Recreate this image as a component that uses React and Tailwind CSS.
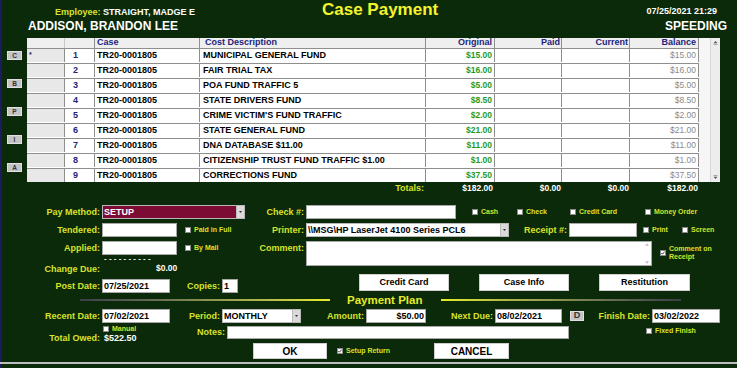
import React from 'react';

const items = [
  { n: 1, desc: 'MUNICIPAL GENERAL FUND', amt: '$15.00' },
  { n: 2, desc: 'FAIR TRIAL TAX', amt: '$16.00' },
  { n: 3, desc: 'POA FUND TRAFFIC 5', amt: '$5.00' },
  { n: 4, desc: 'STATE DRIVERS FUND', amt: '$8.50' },
  { n: 5, desc: "CRIME VICTIM'S FUND TRAFFIC", amt: '$2.00' },
  { n: 6, desc: 'STATE GENERAL FUND', amt: '$21.00' },
  { n: 7, desc: 'DNA DATABASE $11.00', amt: '$11.00' },
  { n: 8, desc: 'CITIZENSHIP TRUST FUND TRAFFIC $1.00', amt: '$1.00' },
  { n: 9, desc: 'CORRECTIONS FUND', amt: '$37.50' },
];

const Lbl = ({ w, children, cls = '' }) => (
  <div className={`${w} shrink-0 whitespace-nowrap pr-[2px] text-right text-[9px] font-bold leading-[14px] text-[#d9e22b] ${cls}`}>
    {children}
  </div>
);

const Field = ({ w, children, cls = '' }) => (
  <div className={`${w} h-[14px] shrink-0 overflow-hidden whitespace-nowrap border border-[#a8a8a8] bg-white px-[1px] text-[9px] font-bold leading-[12px] text-black ${cls}`}>
    {children}
  </div>
);

const Arrow = () => (
  <span className="flex w-[8px] shrink-0 items-center justify-center border-l border-[#bdbdbd] bg-[#dadada]">
    <svg width="3" height="2" viewBox="0 0 3 2">
      <path d="M0 0h3L1.5 2z" fill="#333" />
    </svg>
  </span>
);

const Select = ({ w, children, cls = '' }) => (
  <div className={`${w} flex h-[14px] shrink-0 items-stretch border border-[#b8b8b8] text-[9px] font-bold leading-[12px] ${cls}`}>
    <span className="flex-1 overflow-hidden whitespace-nowrap pl-[1px]">{children}</span>
    <Arrow />
  </div>
);

const Check = ({ label, checked, w = '', cls = '' }) => (
  <div className={`${w} flex shrink-0 items-center gap-[3px] whitespace-nowrap text-[7px] font-bold leading-[8px] text-[#d9e22b] ${cls}`}>
    <span className="flex h-[6px] w-[6px] shrink-0 items-center justify-center border border-[#8a8a8a] bg-white">
      {checked && (
        <svg width="4" height="4" viewBox="0 0 4 4">
          <path d="M0.3 2l1.1 1.2L3.7 0.6" stroke="#222" strokeWidth="0.9" fill="none" />
        </svg>
      )}
    </span>
    {label}
  </div>
);

const Btn = ({ w, h = 'h-[17px]', bg = 'bg-white border-[#cfcfcf] text-black', children, cls = '' }) => (
  <div className={`${w} ${h} ${bg} flex shrink-0 items-center justify-center border text-[9px] font-bold ${cls}`}>
    {children}
  </div>
);

const SideBtn = ({ children }) => (
  <div className="flex h-[9px] w-[15px] items-center justify-center border border-[#e0e0e0] bg-[#c4c4c4] text-[6.5px] font-bold text-[#333]">
    {children}
  </div>
);

const cell = 'flex h-full shrink-0 items-center border-r border-[#8e8e8e]';

export default function App() {
  return (
    <div
      className="flex h-[368px] w-[737px] flex-col overflow-hidden bg-[#0a2a0a] text-white shadow-[inset_2px_0_0_#1b1b5e]"
      style={{ fontFamily: '"Liberation Sans", Arial, sans-serif' }}
    >
      {/* header */}
      <div className="flex h-[19px] shrink-0">
        <div className="w-[322px] shrink-0 whitespace-nowrap pl-[55px] pt-[8px] text-[9px] font-bold leading-[9px]">
          <span className="text-[#d9e22b]">Employee:</span> STRAIGHT, MADGE E
        </div>
        <div className="w-[120px] shrink-0 whitespace-nowrap text-[17px] font-bold leading-[20px] text-[#f4f42c]">Case Payment</div>
        <div className="flex-1 pr-[20px] pt-[7px] text-right text-[9px] font-bold leading-[9px]">07/25/2021 21:29</div>
      </div>
      <div className="flex h-[19px] shrink-0 justify-between text-[12px] font-bold leading-[14px]">
        <div className="pl-[28px]">ADDISON, BRANDON LEE</div>
        <div className="pr-[10px]">SPEEDING</div>
      </div>

      {/* grid */}
      <div className="flex h-[144px] shrink-0">
        <div className="flex w-[27px] shrink-0 flex-col items-end gap-[19px] pr-[5px] pt-[13px]">
          <SideBtn>C</SideBtn>
          <SideBtn>B</SideBtn>
          <SideBtn>P</SideBtn>
          <SideBtn>I</SideBtn>
          <SideBtn>A</SideBtn>
        </div>
        <div className="flex w-[693px] shrink-0 overflow-hidden bg-white">
          <div className="w-[672px] shrink-0 text-[9px] font-bold">
            <div className="flex h-[11px] border-b border-[#8e8e8e] bg-[#efefef] text-[#23237a]">
              <div className={`${cell} w-[38px] border-[#c8c8c8]`} />
              <div className={`${cell} w-[30px]`} />
              <div className={`${cell} w-[105px] pl-[2px]`}>Case</div>
              <div className={`${cell} w-[226px] pl-[5px]`}>Cost Description</div>
              <div className={`${cell} w-[69px] justify-end pr-[2px]`}>Original</div>
              <div className={`${cell} w-[67px] justify-end pr-[1px]`}>Paid</div>
              <div className={`${cell} w-[68px] justify-end pr-[1px]`}>Current</div>
              <div className={`${cell} w-[69px] justify-end pr-[2px]`}>Balance</div>
            </div>
            {items.map((r) => (
              <div key={r.n} className="flex h-[15px] border-b border-[#8e8e8e] pb-[1px]">
                <div className={`${cell} w-[38px] items-start bg-[#e8e8e8] pl-[2px] pt-[2px] text-[7px] leading-[7px] text-[#23237a]`}>
                  {r.n === 1 ? '*' : ''}
                </div>
                <div className={`${cell} w-[30px] pl-[8px] text-[#23237a]`}>{r.n}</div>
                <div className={`${cell} w-[105px] pl-[2px] text-black`}>TR20-0001805</div>
                <div className={`${cell} w-[226px] whitespace-nowrap pl-[3px] text-black`}>{r.desc}</div>
                <div className={`${cell} w-[69px] justify-end pr-[2px] text-[8.5px] text-[#1f9a1f]`}>{r.amt}</div>
                <div className={`${cell} w-[67px]`} />
                <div className={`${cell} w-[68px]`} />
                <div className={`${cell} w-[69px] justify-end pr-[2px] text-[8.5px] font-normal text-[#8a8a8a]`}>{r.amt}</div>
              </div>
            ))}
          </div>
          <div className="flex flex-1 justify-end bg-[#f6f6f6]">
            <div className="flex w-[10px] flex-col items-center justify-between border-l border-[#d6d6d6] bg-[#ededed] py-[2px]">
              <svg width="5" height="5" viewBox="0 0 5 5">
                <path d="M0.5 3.2h4L2.5 1z" fill="#555" />
                <path d="M0.5 4.5h4" stroke="#777" strokeWidth="0.6" />
              </svg>
              <svg width="5" height="5" viewBox="0 0 5 5">
                <path d="M0.5 1.8h4L2.5 4z" fill="#555" />
                <path d="M0.5 0.5h4" stroke="#777" strokeWidth="0.6" />
              </svg>
            </div>
          </div>
        </div>
      </div>

      {/* totals */}
      <div className="flex h-[12px] shrink-0 text-[8.5px] font-bold leading-[12px]">
        <div className="w-[426px] shrink-0 pr-[2px] text-right text-[9px] text-[#d9e22b]">Totals:</div>
        <div className="w-[69px] shrink-0 pr-[2px] text-right">$182.00</div>
        <div className="w-[67px] shrink-0 pr-[1px] text-right">$0.00</div>
        <div className="w-[68px] shrink-0 pr-[1px] text-right">$0.00</div>
        <div className="w-[68px] shrink-0 text-right">$182.00</div>
      </div>

      {/* pay method */}
      <div className="mt-[11px] flex h-[14px] shrink-0 items-center">
        <Lbl w="w-[102px]">Pay Method:</Lbl>
        <Select w="w-[143px]" cls="bg-[#7c0c34] text-white">SETUP</Select>
        <Lbl w="w-[61px]">Check #:</Lbl>
        <Field w="w-[150px]" />
        <Check w="w-[45px]" cls="ml-[16px]" label="Cash" />
        <Check w="w-[53px]" label="Check" />
        <Check w="w-[75px]" label="Credit Card" />
        <Check label="Money Order" />
      </div>

      {/* tendered */}
      <div className="mt-[4px] flex h-[14px] shrink-0 items-center">
        <Lbl w="w-[102px]">Tendered:</Lbl>
        <Field w="w-[75px]" />
        <Check w="w-[60px]" cls="ml-[8px]" label="Paid in Full" />
        <Lbl w="w-[61px]">Printer:</Lbl>
        <Select w="w-[203px]" cls="bg-white text-black">\\MSG\HP LaserJet 4100 Series PCL6</Select>
        <Lbl w="w-[60px]">Receipt #:</Lbl>
        <Field w="w-[68px]" />
        <Check w="w-[39px]" cls="ml-[6px]" label="Print" />
        <Check label="Screen" />
      </div>

      {/* applied / comment */}
      <div className="mt-[4px] flex h-[33px] shrink-0 items-start">
        <div className="w-[306px] shrink-0">
          <div className="flex h-[14px] items-center">
            <Lbl w="w-[102px]">Applied:</Lbl>
            <Field w="w-[75px]" />
            <Check w="w-[60px]" cls="ml-[8px]" label="By Mail" />
            <Lbl w="w-[61px]" cls="self-start leading-[12px]">Comment:</Lbl>
          </div>
          <div className="h-[8px] whitespace-pre pl-[104px] text-[8px] font-bold leading-[8px]">- - - - - - - - - -</div>
          <div className="flex h-[11px] items-center">
            <Lbl w="w-[102px]" cls="leading-[11px]">Change Due:</Lbl>
            <div className="ml-[54px] text-[8.5px] font-bold">$0.00</div>
          </div>
        </div>
        <div className="flex h-[25px] w-[346px] shrink-0 justify-end border border-[#a8a8a8] bg-white">
          <div className="flex w-[8px] flex-col items-center justify-between py-[1px]">
            <svg width="4" height="3" viewBox="0 0 4 3"><path d="M0 3h4L2 0z" fill="#c8c8c8" /></svg>
            <svg width="4" height="3" viewBox="0 0 4 3"><path d="M0 0h4L2 3z" fill="#c8c8c8" /></svg>
          </div>
        </div>
        <Check cls="ml-[8px] mt-[4px]" checked label={<span>Comment on<br />Receipt</span>} />
      </div>

      {/* post date + buttons */}
      <div className="flex h-[19px] shrink-0 items-start">
        <div className="mt-[5px] flex h-[14px] items-center">
          <Lbl w="w-[102px]">Post Date:</Lbl>
          <Field w="w-[68px]">07/25/2021</Field>
          <Lbl w="w-[52px]">Copies:</Lbl>
          <Field w="w-[16px]">1</Field>
        </div>
        <Btn w="w-[90px]" cls="ml-[121px]">Credit Card</Btn>
        <Btn w="w-[90px]" cls="ml-[30px]">Case Info</Btn>
        <Btn w="w-[91px]" cls="ml-[30px]">Restitution</Btn>
      </div>

      {/* payment plan divider */}
      <div className="flex h-[14px] shrink-0 items-center">
        <div className="ml-[80px] h-[2px] w-[250px] bg-gradient-to-r from-[#3a3f4a] to-[#e6ea2a]" />
        <div className="ml-[17px] whitespace-nowrap text-[11.5px] font-bold leading-[14px] text-[#e6ea2a]">Payment Plan</div>
        <div className="ml-[19px] h-[2px] w-[240px] bg-gradient-to-r from-[#e6ea2a] to-[#3a3f4a]" />
      </div>

      {/* recent date */}
      <div className="mt-[2px] flex h-[14px] shrink-0 items-center">
        <Lbl w="w-[102px]">Recent Date:</Lbl>
        <Field w="w-[68px]">07/02/2021</Field>
        <Lbl w="w-[52px]">Period:</Lbl>
        <Select w="w-[79px]" cls="bg-white text-black">MONTHLY</Select>
        <Lbl w="w-[65px]">Amount:</Lbl>
        <Field w="w-[60px]" cls="text-right">$50.00</Field>
        <Lbl w="w-[69px]">Next Due:</Lbl>
        <Field w="w-[67px]">08/02/2021</Field>
        <Btn w="w-[14px]" h="h-[10px]" bg="bg-[#c4c4c4] border-[#e0e0e0] text-[#333]" cls="ml-[8px] text-[6.5px]">D</Btn>
        <Lbl w="w-[68px]">Finish Date:</Lbl>
        <Field w="w-[68px]">03/02/2022</Field>
      </div>

      {/* manual / notes / total owed */}
      <div className="mt-[1px] flex h-[19px] shrink-0 items-start">
        <div className="w-[170px] shrink-0">
          <div className="flex h-[9px] items-center pl-[103px]">
            <Check label="Manual" />
          </div>
          <div className="flex h-[10px] items-center">
            <Lbl w="w-[102px]" cls="leading-[10px]">Total Owed:</Lbl>
            <div className="pl-[2px] text-[9px] font-bold leading-[10px]">$522.50</div>
          </div>
        </div>
        <Lbl w="w-[57px]" cls="mt-[1px]">Notes:</Lbl>
        <div className="mt-[2px] h-[13px] w-[342px] shrink-0 border border-[#a8a8a8] bg-white" />
        <div className="ml-[77px] mt-[3px] flex h-[8px] items-center">
          <Check label="Fixed Finish" />
        </div>
      </div>

      {/* ok / cancel */}
      <div className="flex h-[16px] shrink-0 items-center">
        <Btn w="w-[74px]" h="h-[16px]" cls="ml-[253px] text-[10px]">OK</Btn>
        <Check w="w-[97px]" cls="ml-[10px]" checked label="Setup Return" />
        <Btn w="w-[75px]" h="h-[16px]" cls="text-[10px]">CANCEL</Btn>
      </div>

      <div className="mt-[3px] h-[2px] shrink-0 bg-[#bdbdbd]" />
    </div>
  );
}
